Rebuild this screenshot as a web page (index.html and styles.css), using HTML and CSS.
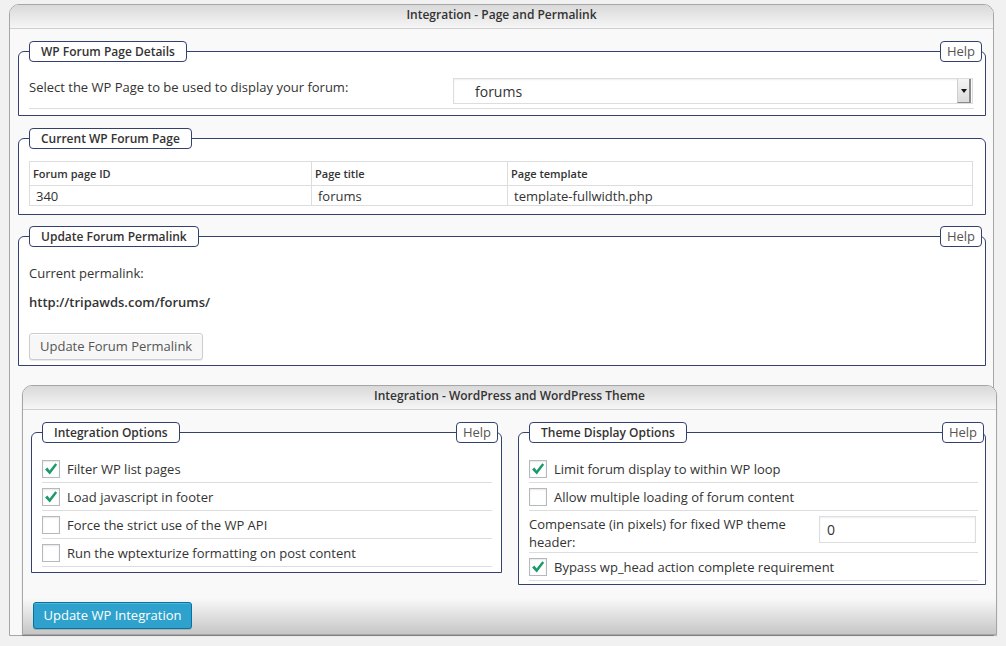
FILE: index.html
```html
<!DOCTYPE html>
<html lang="en">
<head>
<meta charset="utf-8">
<title>Integration</title>
<link rel="stylesheet" href="styles.css">
</head>
<body>
<div class="panel outer">
  <div class="panel-head">Integration - Page and Permalink</div>
  <div class="panel-body">

    <div class="group">
      <fieldset class="box box-details">
        <legend>WP Forum Page Details</legend>
        <div class="select-row">
          <span class="select-label">Select the WP Page to be used to display your forum:</span>
          <div class="select"><span class="select-value">forums</span><span class="select-arrow"></span></div>
        </div>
      </fieldset>
      <span class="help">Help</span>
    </div>

    <div class="group">
      <fieldset class="box box-current">
        <legend>Current WP Forum Page</legend>
        <table class="info">
          <tr class="info-head"><th class="c1">Forum page ID</th><th class="c2">Page title</th><th class="c3">Page template</th></tr>
          <tr class="info-data"><td>340</td><td>forums</td><td>template-fullwidth.php</td></tr>
        </table>
      </fieldset>
    </div>

    <div class="group group-tight">
      <fieldset class="box box-permalink">
        <legend>Update Forum Permalink</legend>
        <p class="para">Current permalink:</p>
        <p class="para para-link">http://tripawds.com/forums/</p>
        <button class="btn" type="button">Update Forum Permalink</button>
      </fieldset>
      <span class="help">Help</span>
    </div>

    <div class="panel inner">
      <div class="panel-head">Integration - WordPress and WordPress Theme</div>
      <div class="columns">
        <div class="group group-col">
          <fieldset class="box box-left">
            <legend>Integration Options</legend>
            <div class="opt"><span class="cb checked"><svg viewBox="0 0 16 16"><path d="M1.2 8.6 L3.9 6.4 L6.4 9.6 L12.9 1.4 L15 3.2 L6.6 14.2 Z"/></svg></span><span>Filter WP list pages</span></div>
            <div class="opt"><span class="cb checked"><svg viewBox="0 0 16 16"><path d="M1.2 8.6 L3.9 6.4 L6.4 9.6 L12.9 1.4 L15 3.2 L6.6 14.2 Z"/></svg></span><span>Load javascript in footer</span></div>
            <div class="opt"><span class="cb"></span><span>Force the strict use of the WP API</span></div>
            <div class="opt"><span class="cb"></span><span>Run the wptexturize formatting on post content</span></div>
          </fieldset>
          <span class="help">Help</span>
        </div>
        <div class="group group-col">
          <fieldset class="box box-right">
            <legend>Theme Display Options</legend>
            <div class="opt"><span class="cb checked"><svg viewBox="0 0 16 16"><path d="M1.2 8.6 L3.9 6.4 L6.4 9.6 L12.9 1.4 L15 3.2 L6.6 14.2 Z"/></svg></span><span>Limit forum display to within WP loop</span></div>
            <div class="opt"><span class="cb"></span><span>Allow multiple loading of forum content</span></div>
            <div class="opt opt-field">
              <span class="field-label">Compensate (in pixels) for fixed WP theme header:</span>
              <span class="field-input">0</span>
            </div>
            <div class="opt"><span class="cb checked"><svg viewBox="0 0 16 16"><path d="M1.2 8.6 L3.9 6.4 L6.4 9.6 L12.9 1.4 L15 3.2 L6.6 14.2 Z"/></svg></span><span>Bypass wp_head action complete requirement</span></div>
          </fieldset>
          <span class="help help-right">Help</span>
        </div>
      </div>
      <div class="panel-foot">
        <button class="btn btn-primary" type="button">Update WP Integration</button>
      </div>
    </div>

  </div>
</div>
</body>
</html>
```
FILE: styles.css
```css
* { box-sizing: border-box; }

html, body {
  margin: 0;
  padding: 0;
  background: #f1f1f1;
}

body {
  font-family: "Open Sans", "Liberation Sans", sans-serif;
  font-size: 13px;
  color: #333;
  width: 1006px;
  height: 646px;
  overflow: hidden;
}

.panel {
  border: 1px solid #a6a6a6;
  border-radius: 10px 10px 0 0;
  background: #f9f9f9;
}

.outer {
  width: 985px;
  margin: 4px 0 0 9px;
}

.panel-head {
  height: 24px;
  line-height: 19px;
  border-bottom: 1px solid #cfcfcf;
  border-radius: 9px 9px 0 0;
  background: linear-gradient(#d9d9d9, #f6f6f6);
  text-align: center;
  font-weight: 600;
  font-size: 12px;
  color: #333;
}

.panel-body {
  padding: 0 7px 0 8px;
}

.group {
  position: relative;
  margin-top: 12px;
}

.group-tight {
  margin-top: 11px;
}

.box {
  margin: 0;
  min-width: 0;
  border: 1px solid #34406d;
  border-radius: 6px 6px 0 0;
  background: #fff;
}

.box legend {
  padding: 0 11px;
  height: 21px;
  line-height: 19px;
  border: 1px solid #34406d;
  border-radius: 4px;
  background: #fff;
  font-weight: 600;
  font-size: 12px;
  color: #333;
}

.help {
  position: absolute;
  top: 0;
  right: 4px;
  height: 21px;
  line-height: 19px;
  padding: 0 6px;
  border: 1px solid #34406d;
  border-radius: 4px;
  background: #fff;
  color: #555;
  font-size: 13px;
}

/* fieldset 1 */
.box-details {
  padding: 12px 11px 6px 10px;
}

.select-row {
  display: flex;
  align-items: flex-start;
  padding: 4px 0 4px;
  border-bottom: 1px solid #ddd;
}

.select-label {
  width: 424px;
  flex: 0 0 424px;
  line-height: 18px;
  padding-top: 0;
}

.select {
  display: flex;
  align-items: center;
  width: 520px;
  height: 26px;
  border: 1px solid #ddd;
  background: #fff;
  box-shadow: inset 0 1px 2px rgba(0,0,0,0.07);
}

.select-value {
  flex: 1;
  padding-left: 21px;
  font-size: 14px;
  color: #333;
}

.select-arrow {
  position: relative;
  width: 14px;
  height: 24px;
  margin-right: 1px;
  border-left: 1px solid #cfcfcf;
  border-right: 2px solid #8a8a8a;
  border-bottom: 1px solid #8a8a8a;
  background: linear-gradient(#f4f4f4, #dcdcdc);
}

.select-arrow::after {
  content: "";
  position: absolute;
  left: 3px;
  top: 10px;
  border-left: 3px solid transparent;
  border-right: 3px solid transparent;
  border-top: 4px solid #111;
}

/* fieldset 2 */
.box-current {
  padding: 12px 11px 8px 10px;
}

.info {
  width: 944px;
  border-collapse: collapse;
  background: #fff;
}

.info th, .info td {
  border: 1px solid #ddd;
  text-align: left;
  white-space: nowrap;
}

.info th {
  height: 24px;
  padding: 0 3px;
  font-size: 11px;
  font-weight: 600;
  color: #333;
}

.info td {
  height: 20px;
  padding: 0 6px;
  font-size: 13px;
  line-height: 18px;
}

.info .c1 { width: 282px; }
.info .c2 { width: 196px; }

/* fieldset 3 */
.box-permalink {
  padding: 17px 11px 5px 10px;
}

.para {
  margin: 0 0 11px;
  line-height: 18px;
}

.para-link {
  font-weight: 600;
  margin-bottom: 22px;
}

.btn {
  display: block;
  height: 27px;
  padding: 0 10px;
  border: 1px solid #ccc;
  border-radius: 3px;
  background: #f7f7f7;
  box-shadow: inset 0 1px 0 #fff, 0 1px 0 rgba(0,0,0,0.08);
  font-family: inherit;
  font-size: 13px;
  color: #555;
  line-height: 25px;
}

/* inner panel */
.inner {
  width: 975px;
  margin: 19px 0 0 4px;
  box-shadow: 0 1px 1px rgba(0,0,0,0.25);
}

.columns {
  display: grid;
  grid-template-columns: 471px 468px;
  column-gap: 16px;
  align-items: start;
  padding: 0 11px 0 8px;
}

.group-col {
  margin-top: 12px;
}

.help-right {
  right: 2px;
}

.box-left {
  padding: 12px 9px 5px 10px;
}

.box-right {
  padding: 12px 7px 3px 10px;
}

.opt {
  display: flex;
  align-items: center;
  height: 28px;
  padding-top: 1px;
  border-bottom: 1px solid #ddd;
  font-size: 13px;
}

.cb {
  flex: 0 0 18px;
  width: 18px;
  height: 18px;
  margin: 0 7px 0 0;
  border: 1px solid #b4b9be;
  background: #fff;
  box-shadow: inset 0 1px 2px rgba(0,0,0,0.1);
  display: flex;
  align-items: center;
  justify-content: center;
}

.cb svg {
  width: 14px;
  height: 14px;
}

.cb svg path {
  fill: #1b9a6a;
}

.opt-field {
  height: 42px;
  align-items: flex-start;
  padding-top: 0;
}

.field-label {
  flex: 0 0 280px;
  width: 280px;
  padding-top: 4px;
  line-height: 18px;
}

.field-input {
  margin: 5px 2px 0 auto;
  width: 157px;
  height: 27px;
  padding-left: 7px;
  line-height: 25px;
  border: 1px solid #ddd;
  background: #fff;
  box-shadow: inset 0 1px 2px rgba(0,0,0,0.07);
  font-size: 14px;
  color: #333;
}

.panel-foot {
  margin-top: 13px;
  height: 36px;
  padding: 4px 10px 5px;
  background: linear-gradient(#f9f9f9, #c6c6c6);
}

.btn-primary {
  width: 159px;
  padding: 0;
  border-color: #0074a2;
  background: #2ea2cc;
  box-shadow: inset 0 1px 0 rgba(120,200,230,0.5), 0 1px 0 rgba(0,0,0,0.15);
  color: #fff;
  text-align: center;
}
```
